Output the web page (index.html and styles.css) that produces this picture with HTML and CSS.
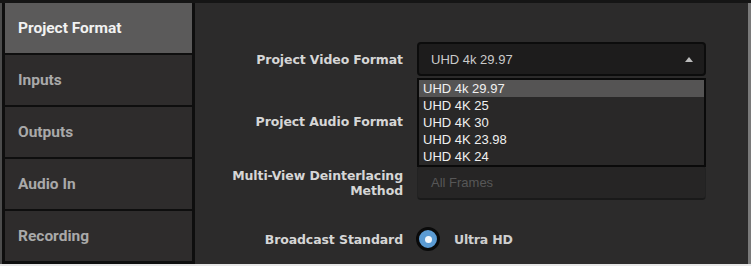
FILE: index.html
```html
<!DOCTYPE html>
<html>
<head>
<meta charset="utf-8">
<link rel="stylesheet" href="styles.css">
</head>
<body>
<div class="frame">
  <nav class="sidebar">
    <div class="tab active">Project Format</div>
    <div class="tab">Inputs</div>
    <div class="tab">Outputs</div>
    <div class="tab">Audio In</div>
    <div class="tab">Recording</div>
  </nav>
  <main class="panel">
    <div class="form">
      <div class="label">Project Video Format</div>
      <div class="control">
        <div class="select open">
          <span>UHD 4k 29.97</span>
          <span class="caret"></span>
        </div>
        <ul class="options">
          <li class="hl">UHD 4k 29.97</li>
          <li>UHD 4K 25</li>
          <li>UHD 4K 30</li>
          <li>UHD 4K 23.98</li>
          <li>UHD 4K 24</li>
        </ul>
      </div>

      <div class="label">Project Audio Format</div>
      <div class="control">
        <div class="select"></div>
      </div>

      <div class="label two">Multi-View Deinterlacing<br>Method</div>
      <div class="control">
        <div class="select disabled"><span>All Frames</span></div>
      </div>

      <div class="label">Broadcast Standard</div>
      <div class="control radio-row">
        <span class="radio"></span>
        <span class="radio-text">Ultra HD</span>
      </div>
    </div>
  </main>
</div>
</body>
</html>
```

FILE: styles.css
```css
html, body {
  margin: 0;
  padding: 0;
  background: #e8e8e8;
}

.frame {
  width: 751px;
  height: 264px;
  display: flex;
  background: #2c2b2b;
  border-top: 3px solid #151515;
  box-sizing: border-box;
  overflow: hidden;
}

.sidebar {
  width: 195px;
  flex: 0 0 195px;
  display: flex;
  flex-direction: column;
  gap: 2px;
  background: #0e0e0e;
  border-left: 2px solid #4c4c4c;
  padding-left: 3px;
  padding-right: 3px;
  box-sizing: border-box;
}

.tab {
  height: 50px;
  flex: 0 0 50px;
  display: flex;
  align-items: center;
  padding-left: 13px;
  background: #2e2c2c;
  color: #a9a9a9;
  font-family: Roboto, "Liberation Sans", sans-serif;
  font-weight: 700;
  font-size: 15.5px;
}

.tab.active {
  background: #5b5a5a;
  color: #f2f2f2;
}

.panel {
  flex: 1;
  position: relative;
  border-right: 3px solid #7a7a7a;
}

.form {
  display: grid;
  grid-template-columns: 208px 289px;
  grid-template-rows: 34px 34px 34px 22px;
  column-gap: 14px;
  row-gap: 28px;
  padding-top: 39px;
}

.label {
  text-align: right;
  align-self: center;
  color: #d6d6d6;
  font-family: "DejaVu Sans", sans-serif;
  font-weight: 700;
  font-size: 12.5px;
  letter-spacing: -0.1px;
  line-height: 15px;
}

.control {
  position: relative;
}

.select {
  height: 34px;
  box-sizing: border-box;
  display: flex;
  align-items: center;
  justify-content: space-between;
  padding: 0 11px 0 12px;
  background: #1d1c1c;
  border: 2px solid #0c0c0c;
  border-radius: 4px;
  color: #cacaca;
  font-family: "Liberation Sans", Arial, sans-serif;
  font-size: 13px;
}

.select.disabled {
  background: #262525;
  border: 1px solid #222;
  border-bottom: 2px solid #1a1a1a;
  color: #575757;
  padding-left: 13px;
}

.caret {
  width: 0;
  height: 0;
  border-left: 4px solid transparent;
  border-right: 4px solid transparent;
  border-bottom: 5px solid #bcbcbc;
}

.options {
  position: absolute;
  z-index: 2;
  left: 0;
  top: 36px;
  width: 289px;
  margin: 0;
  padding: 0;
  list-style: none;
  box-sizing: border-box;
  background: #292828;
  border: 2px solid #0a0a0a;
}

.options li {
  height: 17px;
  line-height: 17px;
  padding-left: 4px;
  color: #f0f0f0;
  font-family: "Liberation Sans", Arial, sans-serif;
  font-size: 13px;
}

.options li.hl {
  background: #555454;
}

.radio-row {
  display: flex;
  align-items: center;
  gap: 14px;
}

.radio {
  width: 24px;
  height: 24px;
  box-sizing: border-box;
  border-radius: 50%;
  border: 3px solid #0a0a0a;
  background: #5b9bd3;
  display: flex;
  align-items: center;
  justify-content: center;
  margin-left: -1px;
}

.radio::after {
  content: "";
  width: 7px;
  height: 7px;
  border-radius: 50%;
  background: #f4f8fc;
}

.radio-text {
  color: #cfcfcf;
  font-family: "DejaVu Sans", sans-serif;
  font-weight: 700;
  font-size: 12.5px;
  letter-spacing: -0.2px;
}
```
